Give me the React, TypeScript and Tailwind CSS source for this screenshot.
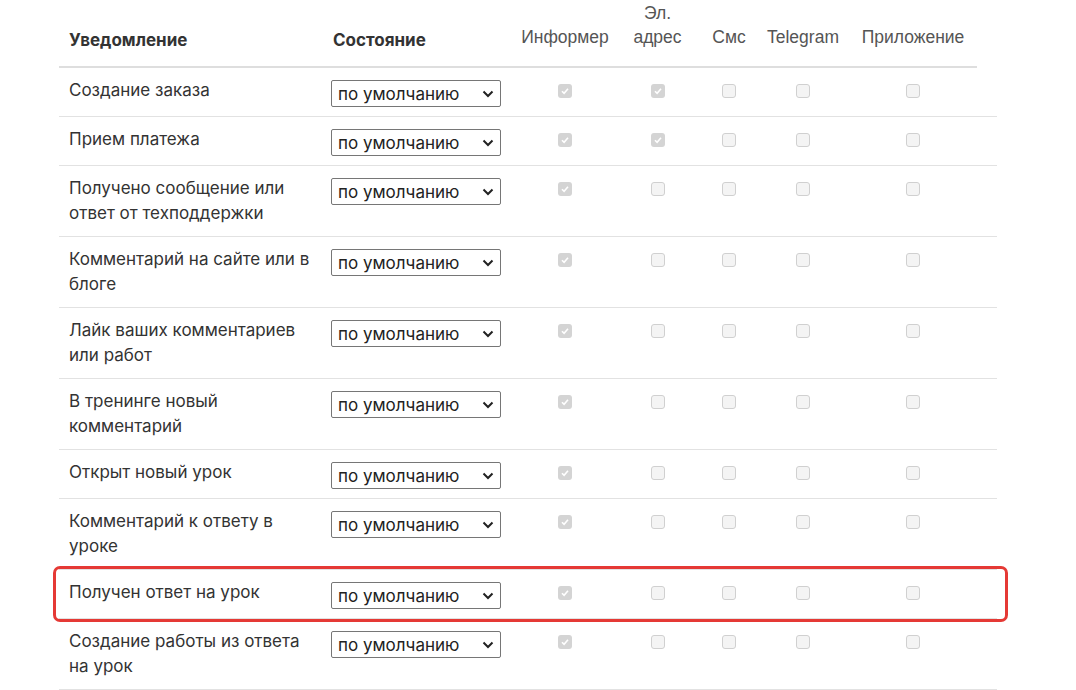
import React from "react";

const rows: [string[], boolean, boolean][] = [
  [["Создание заказа"], true, true],
  [["Прием платежа"], true, true],
  [["Получено сообщение или", "ответ от техподдержки"], true, false],
  [["Комментарий на сайте или в", "блоге"], true, false],
  [["Лайк ваших комментариев", "или работ"], true, false],
  [["В тренинге новый", "комментарий"], true, false],
  [["Открыт новый урок"], true, false],
  [["Комментарий к ответу в", "уроке"], true, false],
  [["Получен ответ на урок"], true, false],
  [["Создание работы из ответа", "на урок"], true, false],
];

function Box({ checked }: { checked: boolean }) {
  return (
    <div className={`w-[14px] h-[14px] rounded-[3px] flex items-center justify-center ${checked ? "bg-[#d4d4d4]" : "bg-[#f4f4f4] border border-[#d0d0d0]"}`}>
      {checked && (
        <svg width="10" height="10" viewBox="0 0 10 10">
          <path d="M2 5.2 L4.1 7.3 L8 2.8" stroke="#fff" strokeWidth="1.6" fill="none" />
        </svg>
      )}
    </div>
  );
}

function Select() {
  return (
    <div className="w-[170px] h-[27px] border border-[#767676] rounded-[2px] flex items-center justify-between pl-[6px] pr-[6px] bg-white">
      <span className="text-[17px] text-[#222] mt-[3px]">по умолчанию</span>
      <svg width="12" height="8" viewBox="0 0 12 8">
        <path d="M1.5 1.5 L6 6 L10.5 1.5" stroke="#222" strokeWidth="2" fill="none" />
      </svg>
    </div>
  );
}

const cols = "grid grid-cols-[262px_199px_90px_95px_48px_100px_120px_24px]";

export default function App() {
  return (
    <div className="w-[1076px] h-[690px] bg-white overflow-hidden relative" style={{ fontFamily: "Inter, 'Noto Sans', sans-serif" }}>
      <div className="ml-[59px] w-[938px]">
        <div className={`${cols} h-[68px] border-b-2 border-[#dedede] w-[918px] items-end`}>
          <div className="pl-[10px] pb-[13px] font-bold text-[17px] text-[#333]">Уведомление</div>
          <div className="pl-[12px] pb-[13px] font-bold text-[17px] text-[#333]">Состояние</div>
          {["Информер", "Эл.|адрес", "Смс", "Telegram", "Приложение"].map((h) => (
            <div key={h} className="text-center pb-[17px] text-[17.5px] leading-[24px] text-[#555] whitespace-nowrap" style={{ fontFamily: "'Liberation Sans', Arial, sans-serif" }}>
              {h.split("|").map((l) => (<div key={l}>{l}</div>))}
            </div>
          ))}
          <div />
        </div>
        {rows.map(([lines, a, b], i) => (
          <div key={i} className={`${cols} border-b border-[#e2e2e2] ${lines.length > 1 ? "h-[71px]" : "h-[49px]"}`}>
            <div className="pl-[10px] pt-[10px] text-[17px] leading-[25px] text-[#333] whitespace-nowrap">
              {lines.map((l) => (<div key={l}>{l}</div>))}
            </div>
            <div className="pl-[10px] pt-[12px]"><Select /></div>
            {[a, b, false, false, false].map((c, j) => (
              <div key={j} className="flex justify-center pt-[16px]"><Box checked={c} /></div>
            ))}
            <div />
          </div>
        ))}
      </div>
      <div className="absolute left-[53px] top-[566px] w-[955px] h-[56px] border-[3px] border-[#e53935] rounded-[7px]" />
    </div>
  );
}
